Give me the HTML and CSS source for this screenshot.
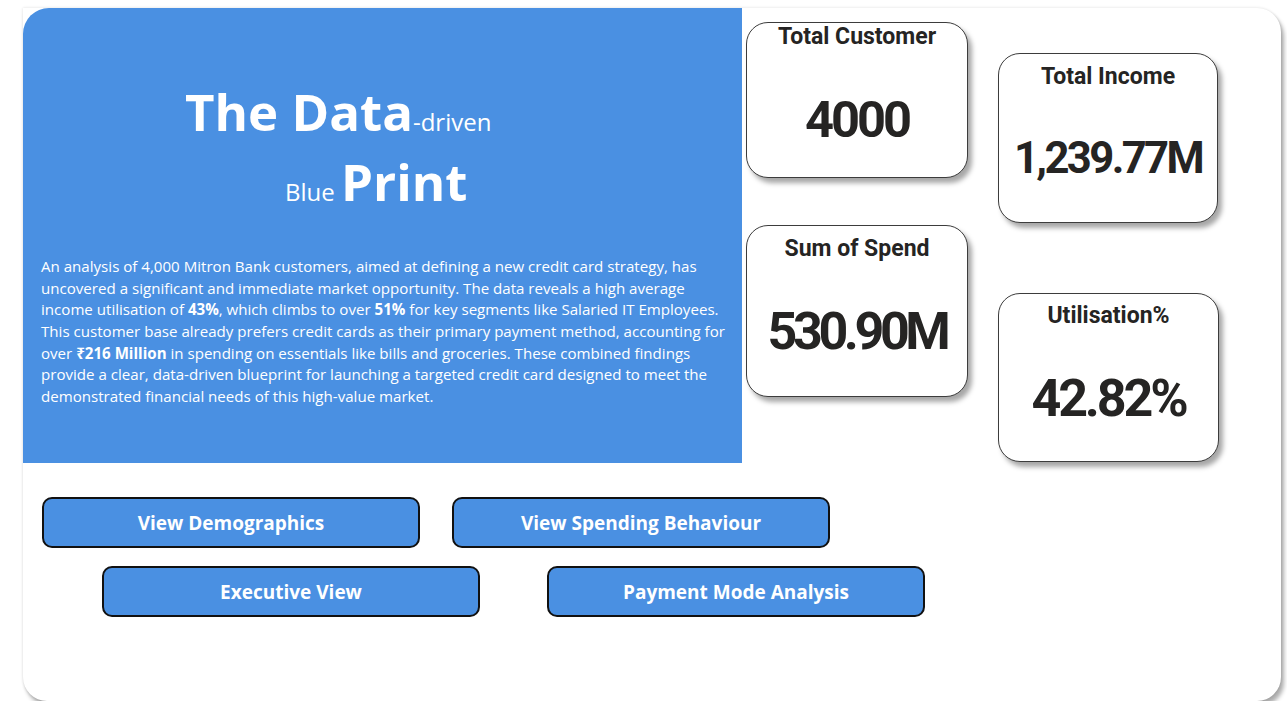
FILE: index.html
```html
<!DOCTYPE html>
<html lang="en">
<head>
<meta charset="utf-8">
<title>The Data-driven Blue Print</title>
<link rel="stylesheet" href="styles.css">
</head>
<body>
<main class="board">
  <section class="top">
    <div class="hero">
      <h1 class="title">
        <span class="title-line line-1"><b>The Data</b><span class="sub">-driven</span></span>
        <span class="title-line line-2"><span class="sub">Blue </span><b>Print</b></span>
      </h1>
      <p class="summary">An analysis of 4,000 Mitron Bank customers, aimed at defining a new credit card strategy, has<br>uncovered a significant and immediate market opportunity. The data reveals a high average<br>income utilisation of <b>43%</b>, which climbs to over <b>51%</b> for key segments like Salaried IT Employees.<br>This customer base already prefers credit cards as their primary payment method, accounting for<br>over <b>₹216 Million</b> in spending on essentials like bills and groceries. These combined findings<br>provide a clear, data-driven blueprint for launching a targeted credit card designed to meet the<br>demonstrated financial needs of this high-value market.</p>
    </div>
    <div class="kpis">
      <div class="kpi-col col-1">
        <div class="kpi kpi-customer">
          <div class="kpi-title">Total Customer</div>
          <div class="kpi-value">4000</div>
        </div>
        <div class="kpi kpi-spend">
          <div class="kpi-title">Sum of Spend</div>
          <div class="kpi-value">530.90M</div>
        </div>
      </div>
      <div class="kpi-col col-2">
        <div class="kpi kpi-income">
          <div class="kpi-title">Total Income</div>
          <div class="kpi-value">1,239.77M</div>
        </div>
        <div class="kpi kpi-util">
          <div class="kpi-title">Utilisation%</div>
          <div class="kpi-value">42.82%</div>
        </div>
      </div>
    </div>
  </section>
  <nav class="actions">
    <div class="btn-row row-1">
      <button class="nav-btn">View Demographics</button>
      <button class="nav-btn">View Spending Behaviour</button>
    </div>
    <div class="btn-row row-2">
      <button class="nav-btn">Executive View</button>
      <button class="nav-btn">Payment Mode Analysis</button>
    </div>
  </nav>
</main>
</body>
</html>
```
FILE: styles.css
```css
html, body {
  margin: 0;
  padding: 0;
  background: #ffffff;
}

body {
  font-family: "Open Sans", "Noto Sans", sans-serif;
}

.board {
  margin: 11px 0 0 23px;
  width: 1258px;
  height: 693px;
  box-sizing: border-box;
  background: #ffffff;
  border-radius: 0 24px 24px 24px;
  box-shadow: 0 0 3px rgba(0, 0, 0, 0.14), 3px 5px 4px rgba(0, 0, 0, 0.32);
}

.top {
  display: flex;
  margin-top: -3px;
}

.hero {
  width: 719px;
  height: 455px;
  background: #4a90e2;
  border-top-left-radius: 26px;
  color: #ffffff;
  box-sizing: border-box;
  padding-top: 68px;
}

.title {
  margin: 0;
  font-weight: 700;
  font-size: 51px;
  line-height: 70px;
}

.title-line {
  display: block;
  white-space: nowrap;
}

.title b {
  font-weight: 700;
}

.line-1 {
  padding-left: 162px;
}

.line-2 {
  padding-left: 262px;
}

.sub {
  font-size: 24px;
  font-weight: 400;
  line-height: 1;
}

.summary {
  margin: 40px 0 0 0;
  padding-left: 18px;
  font-size: 15.1px;
  line-height: 21.67px;
  white-space: nowrap;
}

.summary b {
  font-weight: 700;
}

.kpis {
  display: flex;
  padding-left: 4px;
  gap: 30px;
}

.kpi-col {
  display: flex;
  flex-direction: column;
}

.col-1 {
  padding-top: 14px;
  gap: 47px;
}

.col-2 {
  padding-top: 45px;
  gap: 70px;
}

.kpi {
  box-sizing: border-box;
  background: #ffffff;
  border: 1px solid #3c3c3c;
  border-radius: 22px;
  box-shadow: 4px 5px 5px rgba(0, 0, 0, 0.35);
  display: flex;
  flex-direction: column;
  align-items: center;
  color: #252423;
  font-family: Roboto, "Liberation Sans", sans-serif;
  font-weight: 700;
}

.kpi-title {
  font-size: 23px;
  line-height: 28px;
  letter-spacing: 0;
}

.kpi-value {
  line-height: 1;
  letter-spacing: -0.06em;
}

.kpi-customer {
  width: 222px;
  height: 156px;
}

.kpi-customer .kpi-value {
  font-size: 50.6px;
  margin-top: 44px;
}

.kpi-spend {
  width: 222px;
  height: 172px;
  padding-top: 9px;
}

.kpi-spend .kpi-value {
  font-size: 52px;
  margin-top: 43px;
  letter-spacing: -0.085em;
}

.kpi-income {
  width: 220px;
  height: 170px;
  padding-top: 9px;
}

.kpi-income .kpi-value {
  font-size: 43.6px;
  margin-top: 46px;
}

.kpi-util {
  width: 221px;
  height: 169px;
  padding-top: 8px;
}

.kpi-util .kpi-value {
  font-size: 52px;
  margin-top: 43px;
}

.actions {
  display: flex;
  flex-direction: column;
}

.btn-row {
  display: flex;
}

.row-1 {
  margin-top: 34px;
  padding-left: 19px;
  gap: 32px;
}

.row-2 {
  margin-top: 18px;
  padding-left: 79px;
  gap: 67px;
}

.nav-btn {
  width: 378px;
  height: 51px;
  box-sizing: border-box;
  border: 2px solid #111111;
  border-radius: 10px;
  background: #4a90e2;
  color: #ffffff;
  font-family: "Open Sans", "Noto Sans", sans-serif;
  font-weight: 700;
  font-size: 19px;
  padding: 0;
  cursor: pointer;
}
```
